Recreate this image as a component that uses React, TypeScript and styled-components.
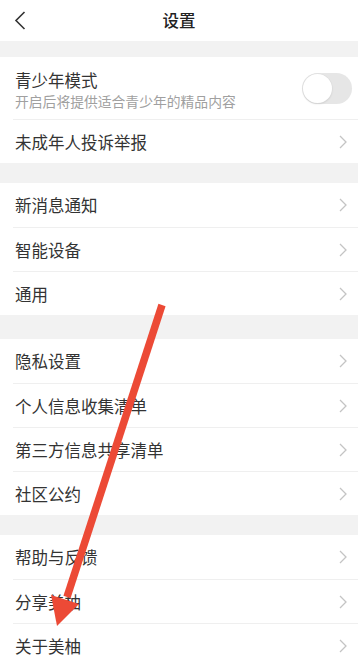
import styled, { createGlobalStyle } from "styled-components";

const GlobalStyle = createGlobalStyle`
  html, body {
    margin: 0;
    padding: 0;
    background: #f2f2f2;
  }
  body {
    font-family: "Noto Sans CJK SC", "Noto Sans", sans-serif;
    -webkit-font-smoothing: antialiased;
  }
`;

type Item = { label: string };

const sections: Item[][] = [
  [{ label: "新消息通知" }, { label: "智能设备" }, { label: "通用" }],
  [
    { label: "隐私设置" },
    { label: "个人信息收集清单" },
    { label: "第三方信息共享清单" },
    { label: "社区公约" },
  ],
  [{ label: "帮助与反馈" }, { label: "分享美柚" }, { label: "关于美柚" }],
];

const Chevron = ({ left }: { left?: boolean }) => (
  <svg
    width={left ? 12 : 8}
    height={left ? 19 : 14}
    viewBox={left ? "0 0 12 19" : "0 0 8 14"}
    fill="none"
  >
    {left ? (
      <path d="M10.5 1 L2 9.5 L10.5 18" stroke="#333" strokeWidth="1.6" />
    ) : (
      <path d="M1 1 L7 7 L1 13" stroke="#c4c4c4" strokeWidth="1.3" />
    )}
  </svg>
);

const Row = ({ label }: Item) => (
  <RowItem>
    <Label>{label}</Label>
    <Chevron />
  </RowItem>
);

export default function App() {
  return (
    <Page>
      <GlobalStyle />
      <Header>
        <BackBtn>
          <Chevron left />
        </BackBtn>
        <Title>设置</Title>
      </Header>

      <Section $gap={16}>
        <TallRow>
          <TextCol>
            <Label>青少年模式</Label>
            <SubLabel>开启后将提供适合青少年的精品内容</SubLabel>
          </TextCol>
          <Switch>
            <Knob />
          </Switch>
        </TallRow>
        <Row label="未成年人投诉举报" />
      </Section>

      {sections.map((items, i) => (
        <Section key={i} $gap={i === 1 ? 24 : 20}>
          {items.map((it) => (
            <Row key={it.label} label={it.label} />
          ))}
        </Section>
      ))}

      <Arrow viewBox="0 0 358 661">
        <line
          x1="162"
          y1="305"
          x2="67"
          y2="597"
          stroke="#ec4a36"
          strokeWidth="7.5"
        />
        <polygon points="57,626 51,595 79,604" fill="#ec4a36" />
      </Arrow>
    </Page>
  );
}

const Page = styled.div`
  position: relative;
  width: 358px;
  height: 661px;
  overflow: hidden;
  background: #f2f2f2;
`;

const Header = styled.header`
  height: 41px;
  background: #fff;
  display: flex;
  align-items: center;
  justify-content: center;
  position: relative;
`;

const BackBtn = styled.div`
  position: absolute;
  left: 14px;
  top: 11px;
  display: flex;
`;

const Title = styled.h1`
  margin: 0;
  font-size: 16.5px;
  font-weight: 500;
  color: #222;
  line-height: 1;
`;

const Section = styled.section<{ $gap: number }>`
  margin-top: ${({ $gap }) => $gap}px;
  background: #fff;
  display: flex;
  flex-direction: column;

  & > * + * {
    border-top: 1px solid #efefef;
  }
`;

const RowItem = styled.div`
  height: 44px;
  box-sizing: border-box;
  margin-left: 13px;
  padding: 0 11px 0 2px;
  display: flex;
  align-items: center;
  justify-content: space-between;
`;

const TallRow = styled(RowItem)`
  height: 62px;
  padding-right: 6px;
`;

const TextCol = styled.div`
  display: flex;
  flex-direction: column;
  gap: 3px;
  padding-top: 2px;
`;

const Label = styled.span`
  font-size: 16.5px;
  color: #333;
  line-height: 20px;
`;

const SubLabel = styled.span`
  font-size: 13.8px;
  color: #a0a0a0;
  line-height: 16px;
`;

const Switch = styled.div`
  width: 50px;
  height: 31px;
  border-radius: 16px;
  background: #e6e6e6;
  position: relative;
`;

const Knob = styled.div`
  position: absolute;
  left: 1px;
  top: 1px;
  width: 29px;
  height: 29px;
  border-radius: 50%;
  background: #fff;
  box-shadow: 0 0 0 0.5px #dcdcdc, 0 1px 2px rgba(0, 0, 0, 0.12);
`;

const Arrow = styled.svg`
  position: absolute;
  left: 0;
  top: 0;
  width: 358px;
  height: 661px;
  pointer-events: none;
`;
